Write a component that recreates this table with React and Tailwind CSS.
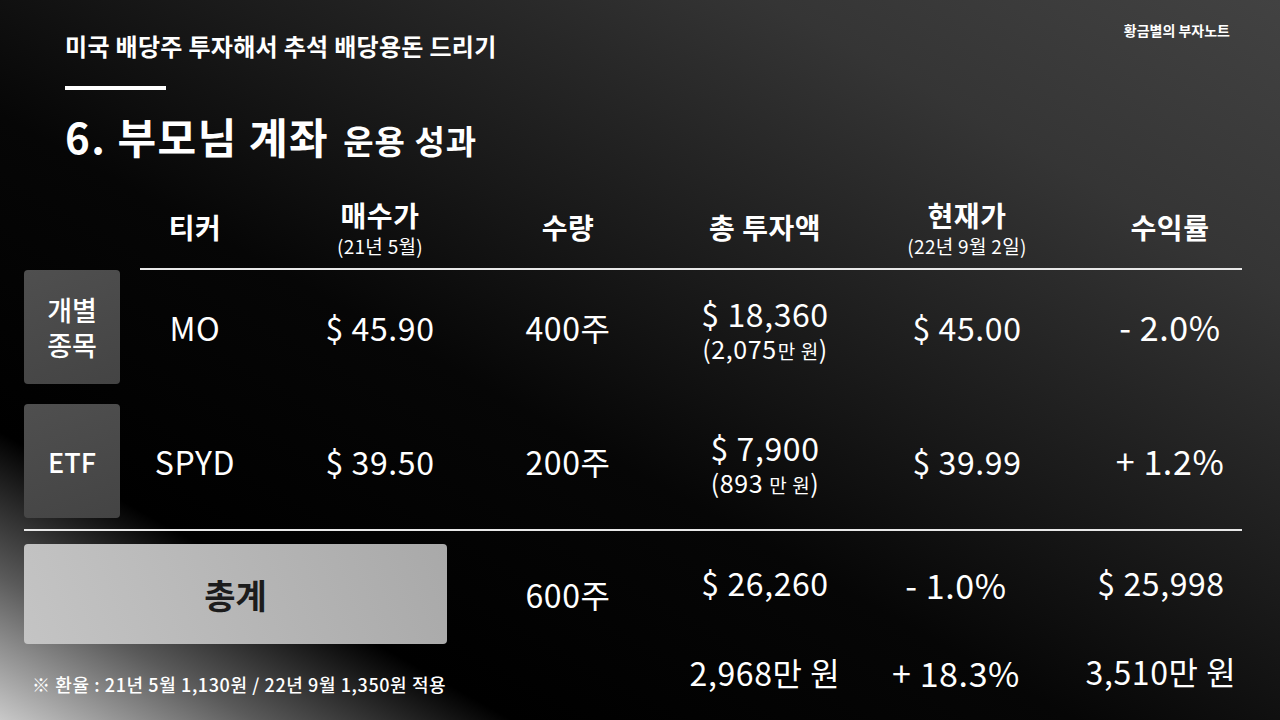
const font = { fontFamily: '"Noto Sans CJK KR", "Noto Sans", sans-serif' };

const rows = [
  {
    tag: ["개별", "종목"],
    ticker: "MO",
    buy: "$ 45.90",
    qty: "400주",
    total: "$ 18,360",
    won: "2,075",
    gap: "ml-[1px]",
    now: "$ 45.00",
    rate: "- 2.0%",
  },
  {
    tag: ["ETF"],
    ticker: "SPYD",
    buy: "$ 39.50",
    qty: "200주",
    total: "$ 7,900",
    won: "893",
    gap: "ml-[6px]",
    now: "$ 39.99",
    rate: "+ 1.2%",
  },
];

const grid =
  "grid grid-cols-[96px_150px_220px_156px_238px_166px_240px] items-center";

function HeadCell({ title, sub }) {
  return (
    <div className="flex flex-col items-center justify-center whitespace-nowrap">
      <span className="text-[28px] font-semibold leading-[34px] tracking-[0.5px]">{title}</span>
      {sub && (
        <span className="text-[19px] leading-[22px] mt-[3px] tracking-[0.3px]">{sub}</span>
      )}
    </div>
  );
}

function Cell({ children, className = "" }) {
  return (
    <div
      className={`flex justify-center whitespace-nowrap text-[32px] leading-[38px] tracking-[0.6px] ${className}`}
    >
      {children}
    </div>
  );
}

export default function App() {
  return (
    <div
      className="relative w-[1280px] h-[720px] overflow-hidden text-white bg-[linear-gradient(to_bottom_left,#424242_0%,#353535_20%,#1a1a1a_42%,#060606_58%,#000_80%,#5a5a5a_90%,#c8c8c8_100%)]"
      style={font}
    >
      <header className="flex items-start justify-between pl-[65px] pr-[50px] pt-[20px]">
        <h2 className="mt-[11px] text-[24px] font-bold leading-[30px] tracking-[0.3px]">
          미국 배당주 투자해서 추석 배당용돈 드리기
        </h2>
        <span className="text-[14px] font-semibold leading-[20px]">황금별의 부자노트</span>
      </header>

      <div className="ml-[65px] mt-[25px] h-[4px] w-[101px] bg-white" />

      <h1 className="ml-[65px] mt-[20px] flex items-baseline gap-[14px] font-bold">
        <span className="text-[42px] leading-[52px] tracking-[1.5px]">6. 부모님 계좌</span>
        <span className="text-[33px] leading-[40px] tracking-[1px]">운용 성과</span>
      </h1>

      <section className="pl-[24px] mt-[28px]">
        <div className={`${grid} h-[78px] pb-[4px]`}>
          <div />
          <HeadCell title="티커" />
          <HeadCell title="매수가" sub="(21년 5월)" />
          <HeadCell title="수량" />
          <HeadCell title="총 투자액" />
          <HeadCell title="현재가" sub="(22년 9월 2일)" />
          <HeadCell title="수익률" />
        </div>
        <div className="ml-[116px] h-[2px] w-[1102px] bg-[#e8e8e8]" />

        {rows.map((r, i) => (
          <div key={r.ticker} className={`${grid} h-[114px] ${i > 0 ? "mt-[20px]" : ""}`}>
            <div className="flex h-full flex-col items-center justify-center rounded-[4px] bg-[linear-gradient(160deg,#4f4f4f,#444)] text-[27px] font-medium leading-[35px]">
              {r.tag.map((t) => (
                <span key={t}>{t}</span>
              ))}
            </div>
            <Cell>{r.ticker}</Cell>
            <Cell>{r.buy}</Cell>
            <Cell>{r.qty}</Cell>
            <div className="flex flex-col items-center whitespace-nowrap tracking-[0.6px] pt-[6px]">
              <span className="text-[32px] leading-[36px]">{r.total}</span>
              <div className="flex items-baseline">
                <span className="text-[25px] leading-[34px]">({r.won}</span>
                <span className={`text-[19px] leading-[26px] ${r.gap}`}>만 원</span>
                <span className="text-[25px] leading-[34px]">)</span>
              </div>
            </div>
            <Cell>{r.now}</Cell>
            <Cell className="text-[34px]">{r.rate}</Cell>
          </div>
        ))}

        <div className="mt-[11px] h-[2px] w-[1218px] bg-[#e8e8e8]" />

        <div className={`${grid} mt-[13px] h-[100px]`}>
          <div className="col-span-3 flex h-full w-[423px] items-center justify-center rounded-[4px] bg-[linear-gradient(70deg,#c4c4c4,#a9a9a9)]">
            <span className="text-[34px] font-bold text-[#1c1c1c]">총계</span>
          </div>
          <Cell>600주</Cell>
          <Cell className="self-start mt-[19px]">$ 26,260</Cell>
          <Cell className="self-start mt-[22px] pr-[22px] text-[34px]">- 1.0%</Cell>
          <Cell className="self-start mt-[19px] pr-[18px]">$ 25,998</Cell>
        </div>

        <div className={`${grid} h-[76px]`}>
          <p className="col-span-3 self-start mt-[28px] pl-[8px] text-[18px] font-medium leading-[24px] tracking-[0.6px] whitespace-nowrap">
            ※ 환율 : 21년 5월 1,130원 / 22년 9월 1,350원 적용
          </p>
          <div />
          <Cell className="self-start mt-[9px]">2,968만 원</Cell>
          <Cell className="self-start mt-[10px] pr-[22px] text-[34px]">+ 18.3%</Cell>
          <Cell className="self-start mt-[8px] pr-[18px]">3,510만 원</Cell>
        </div>
      </section>
    </div>
  );
}
